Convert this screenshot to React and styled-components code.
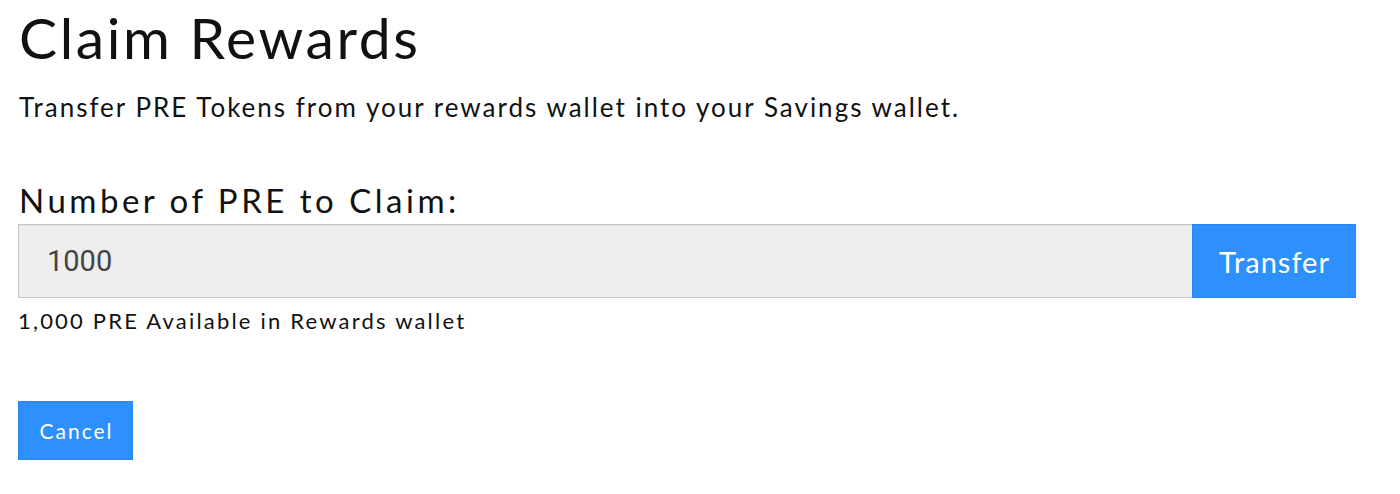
import React from "react";
import styled, { createGlobalStyle } from "styled-components";

const colors = {
  text: "#111",
  primary: "#2e8ffe",
  primaryEdge: "#2a87f2",
  inputBg: "#eeeeee",
  inputBorder: "#c6c6c6",
  inputText: "#444",
  white: "#fff",
};

const GlobalStyle = createGlobalStyle`
  html, body {
    margin: 0;
    padding: 0;
    background: #fff;
  }
  body {
    font-family: Lato, "Open Sans", sans-serif;
    color: ${colors.text};
  }
`;

// ─── Layout ──────────────────────────────────────────────────────────────────

const Page = styled.div`
  display: flex;
  flex-direction: column;
  align-items: flex-start;
  padding: 0 44px 0 18px;
`;

const Title = styled.h1`
  font-size: 57px;
  font-weight: 400;
  letter-spacing: 2.6px;
  line-height: 1;
  margin: 9px 0 0 1px;
`;

const Subtitle = styled.p`
  font-size: 26px;
  font-weight: 400;
  letter-spacing: 2px;
  line-height: 1;
  margin: 28px 0 0 1px;
`;

const FieldLabel = styled.label`
  font-size: 33px;
  font-weight: 400;
  letter-spacing: 3.5px;
  line-height: 1;
  margin: 64px 0 0 1px;
`;

// ─── Input Group ─────────────────────────────────────────────────────────────

const InputGroup = styled.div`
  display: flex;
  align-self: stretch;
  height: 74px;
  margin-top: 7px;
`;

const AmountInput = styled.input`
  flex: 1;
  min-width: 0;
  box-sizing: border-box;
  background: ${colors.inputBg};
  border: 1px solid ${colors.inputBorder};
  border-right: none;
  box-shadow: inset 0 1px 1px rgba(0, 0, 0, 0.06);
  padding: 0 28px;
  font-family: Roboto, sans-serif;
  font-size: 29px;
  color: ${colors.inputText};
  outline: none;
`;

const Button = styled.button`
  box-sizing: border-box;
  width: ${({ $width }) => $width}px;
  height: ${({ $height }) => ($height ? `${$height}px` : "auto")};
  padding: 0;
  background: ${colors.primary};
  border: 1px solid ${colors.primaryEdge};
  border-radius: 0;
  color: ${colors.white};
  font-family: Lato, "Open Sans", sans-serif;
  font-size: ${({ $size }) => $size}px;
  letter-spacing: ${({ $spacing }) => $spacing}px;
  text-indent: ${({ $spacing }) => $spacing}px;
  cursor: pointer;
`;

const HelpText = styled.p`
  font-size: 22px;
  letter-spacing: 2.2px;
  line-height: 1;
  margin: 12px 0 0;
`;

const Actions = styled.div`
  display: flex;
  margin-top: 69px;
`;

// ─── Component ───────────────────────────────────────────────────────────────

const App = () => {
  return (
    <>
      <GlobalStyle />
      <Page>
        <Title>Claim Rewards</Title>
        <Subtitle>
          Transfer PRE Tokens from your rewards wallet into your Savings wallet.
        </Subtitle>
        <FieldLabel htmlFor="amount">Number of PRE to Claim:</FieldLabel>
        <InputGroup>
          <AmountInput id="amount" defaultValue="1000" />
          <Button $width={164} $size={29} $spacing={1}>
            Transfer
          </Button>
        </InputGroup>
        <HelpText>1,000 PRE Available in Rewards wallet</HelpText>
        <Actions>
          <Button $width={115} $height={59} $size={21} $spacing={2}>
            Cancel
          </Button>
        </Actions>
      </Page>
    </>
  );
};

export default App;
